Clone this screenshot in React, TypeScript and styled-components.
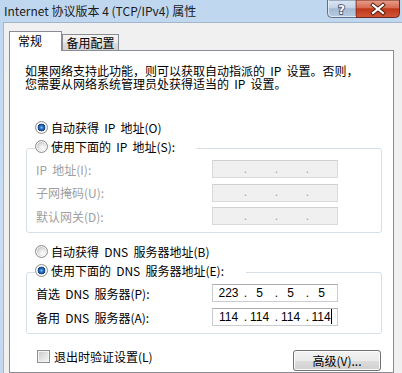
import React from 'react';
import styled, { createGlobalStyle } from 'styled-components';

const GlobalStyle = createGlobalStyle`
  html, body {
    margin: 0;
    padding: 0;
    background: #f0f0f0;
    overflow: hidden;
  }
  body {
    font-family: "Noto Sans CJK SC", "Noto Sans", sans-serif;
    font-size: 12px;
    color: #000;
  }
  * {
    box-sizing: border-box;
  }
`;

const Window = styled.div`
  width: 402px;
  height: 373px;
  overflow: hidden;
  display: flex;
  flex-direction: column;
  background: linear-gradient(to bottom, #bfd6ef 0%, #cadff4 60%, #c3d8ee 100%);
`;

const TitleBar = styled.div`
  height: 22px;
  flex-shrink: 0;
  display: flex;
  justify-content: space-between;
  align-items: flex-start;
`;

const Title = styled.div`
  padding-left: 4px;
  line-height: 21px;
  font-size: 12px;
  color: #1b1b1b;
  white-space: nowrap;
`;

const Controls = styled.div`
  display: flex;
  flex-shrink: 0;
  margin-right: 2px;
`;

const CaptionIcon = styled.svg`
  display: block;
  flex-shrink: 0;
`;

const HelpButton: React.FC = () => (
  <CaptionIcon width="29" height="18" viewBox="0 0 29 18">
    <defs>
      <linearGradient id="helpBg" x1="0" y1="0" x2="0" y2="1">
        <stop offset="0" stopColor="#dde7f3" />
        <stop offset="0.45" stopColor="#c3d3e7" />
        <stop offset="0.5" stopColor="#a5b9d3" />
        <stop offset="1" stopColor="#b8cbe2" />
      </linearGradient>
    </defs>
    <path d="M0.5 0 V13.5 Q0.5 17.5 4.5 17.5 H29 V0 Z" fill="url(#helpBg)" stroke="#5f7189" />
    <path d="M1.5 0 V13 Q1.5 16.5 5 16.5 H29" fill="none" stroke="#eef4fb" strokeOpacity="0.7" />
    <text
      x="14.5"
      y="13.5"
      textAnchor="middle"
      fontFamily="DejaVu Sans, sans-serif"
      fontWeight="bold"
      fontSize="12"
      fill="#fff"
      stroke="#3c4b5e"
      strokeWidth="1.6"
      paintOrder="stroke"
    >
      ?
    </text>
  </CaptionIcon>
);

const CloseButton: React.FC = () => (
  <CaptionIcon width="44" height="18" viewBox="0 0 44 18">
    <defs>
      <linearGradient id="closeBg" x1="0" y1="0" x2="0" y2="1">
        <stop offset="0" stopColor="#e7a08e" />
        <stop offset="0.45" stopColor="#d66b52" />
        <stop offset="0.5" stopColor="#bf3717" />
        <stop offset="1" stopColor="#d0563a" />
      </linearGradient>
    </defs>
    <path d="M0 0 V17.5 H39.5 Q43.5 17.5 43.5 13.5 V0 Z" fill="url(#closeBg)" stroke="#6e2a1c" />
    <path
      d="M17 5 L27 13 M27 5 L17 13"
      stroke="#4a1a10"
      strokeWidth="4"
      strokeLinecap="square"
    />
    <path d="M17 5 L27 13 M27 5 L17 13" stroke="#fff" strokeWidth="2.2" strokeLinecap="square" />
  </CaptionIcon>
);

const Client = styled.div`
  flex: 1;
  min-height: 0;
  margin-left: 3px;
  border-top: 1px solid #a3b5ca;
  border-left: 1px solid #a3b5ca;
  background: #f0f0f0;
  padding: 8px 0 0 5px;
  display: flex;
  flex-direction: column;
`;

const TabStrip = styled.div`
  display: flex;
  align-items: flex-end;
  height: 20px;
  margin-bottom: -1px;
  position: relative;
  z-index: 1;
`;

const Tab = styled.div<{ $active?: boolean }>`
  border: 1px solid #898c95;
  border-bottom: none;
  white-space: nowrap;
  ${({ $active }) =>
    $active
      ? `
    width: 53px;
    height: 20px;
    background: #fff;
    padding-left: 8px;
    line-height: 17px;
  `
      : `
    width: 57px;
    height: 16px;
    margin-bottom: 1px;
    text-align: center;
    line-height: 16px;
    background: linear-gradient(to bottom, #f4f4f4 0%, #e9e9e9 50%, #dcdcdc 51%, #d4d4d4 100%);
  `}
`;

const Panel = styled.div`
  width: 385px;
  flex: 1;
  border: 1px solid #898c95;
  background: #fff;
  padding: 13px 11px 0 15px;
  word-spacing: 2.5px;
`;

const Intro = styled.p`
  margin: 0;
  line-height: 13px;
  white-space: pre;
`;

const RadioRow = styled.div<{ $top: number }>`
  display: flex;
  align-items: center;
  gap: 3px;
  height: 16px;
  margin: ${({ $top }) => $top}px 0 0 10px;
  white-space: pre;
`;

const Radio = styled.span<{ $checked?: boolean }>`
  width: 13px;
  height: 13px;
  flex-shrink: 0;
  border-radius: 50%;
  border: 1px solid #8e8f8f;
  background: ${({ $checked }) =>
    $checked
      ? 'radial-gradient(circle at 50% 50%, #8cc4f5 0, #2f74c4 1.6px, #174d95 3.2px, #10407f 3.6px, #ffffff 4.2px, #f4f4f4 4.8px, #d2d2d2 6px)'
      : 'radial-gradient(circle at 60% 65%, #ffffff 0, #eeeeee 2.5px, #d8d8d8 5px, #c8c8c8 6px)'};
  box-shadow: inset 0 0 0 1px #f7f7f7;
`;

const Group = styled.fieldset<{ $pad: number }>`
  margin: 3px 0 0 1px;
  padding: 2px 0 7px 9px;
  border: 1px solid #d5dfe5;
  border-radius: 3px;
  min-width: 0;
  display: flex;
  flex-direction: column;
  gap: ${({ $pad }) => $pad}px;
`;

const Legend = styled.legend`
  margin-left: -1px;
  padding: 0 22px 4px 0;
  display: flex;
  align-items: center;
  gap: 3px;
  height: 20px;
  white-space: pre;
`;

const FieldRow = styled.div`
  display: flex;
  align-items: center;
  height: 18px;
`;

const FieldLabel = styled.span<{ $disabled?: boolean }>`
  width: 176px;
  color: ${({ $disabled }) => ($disabled ? '#a0a0a0' : '#000')};
  white-space: pre;
`;

const IpField = styled.div<{ $disabled?: boolean }>`
  width: 126px;
  height: 18px;
  border: 1px solid ${({ $disabled }) => ($disabled ? '#d9d9d9' : '#c9cdd2')};
  border-top-color: ${({ $disabled }) => ($disabled ? '#d0d0d0' : '#abadb3')};
  background: ${({ $disabled }) => ($disabled ? '#f0f0f0' : '#fff')};
  padding-left: 3px;
  display: grid;
  grid-template-columns: 25px 6px 25px 6px 25px 6px 25px;
  align-items: center;
  font-family: "Liberation Sans", Arial, sans-serif;
  font-size: 12px;
  line-height: 15px;
  word-spacing: 0;
  color: ${({ $disabled }) => ($disabled ? '#a0a0a0' : '#000')};
`;

const Octet = styled.span`
  text-align: center;
  white-space: nowrap;
`;

const Dot = styled.span`
  text-align: right;
`;

const Caret = styled.span`
  display: inline-block;
  width: 1px;
  height: 15px;
  background: #000;
  vertical-align: -3px;
`;

const Footer = styled.div`
  display: flex;
  justify-content: space-between;
  align-items: flex-start;
  margin-top: 14px;
  padding: 0 1px 0 12px;
`;

const CheckRow = styled.label`
  display: flex;
  align-items: center;
  gap: 4px;
  height: 16px;
`;

const CheckBox = styled.span`
  width: 13px;
  height: 13px;
  border: 1px solid #8e8f8f;
  box-shadow: inset 0 0 0 1px #f4f4f4;
  background: linear-gradient(135deg, #c6c6c6 0%, #e4e4e4 55%, #f7f7f7 100%);
`;

const Button = styled.button`
  margin-top: 2px;
  width: 88px;
  height: 21px;
  padding: 0;
  border: 1px solid #707070;
  border-radius: 3px;
  background: linear-gradient(to bottom, #f2f2f2 0%, #ebebeb 50%, #dddddd 51%, #cfcfcf 100%);
  box-shadow: inset 0 0 0 1px #fcfcfc;
  font-family: inherit;
  font-size: 12px;
  color: #000;
  line-height: 18px;
`;

type IpProps = { values?: string[]; disabled?: boolean; caret?: boolean };

const IpInput: React.FC<IpProps> = ({ values = ['', '', '', ''], disabled, caret }) => (
  <IpField $disabled={disabled}>
    {values.map((v, i) => (
      <React.Fragment key={i}>
        <Octet>
          {v}
          {caret && i === 3 && <Caret />}
        </Octet>
        {i < 3 && <Dot>.</Dot>}
      </React.Fragment>
    ))}
  </IpField>
);

const App: React.FC = () => {
  return (
    <>
      <GlobalStyle />
      <Window>
        <TitleBar>
          <Title>Internet 协议版本 4 (TCP/IPv4) 属性</Title>
          <Controls>
            <HelpButton />
            <CloseButton />
          </Controls>
        </TitleBar>
        <Client>
          <TabStrip>
            <Tab $active>常规</Tab>
            <Tab>备用配置</Tab>
          </TabStrip>
          <Panel>
            <Intro>
              {'如果网络支持此功能，则可以获取自动指派的 IP 设置。否则，\n您需要从网络系统管理员处获得适当的 IP 设置。'}
            </Intro>

            <RadioRow $top={29}>
              <Radio $checked />
              自动获得 IP 地址(O)
            </RadioRow>
            <Group $pad={5.5}>
              <Legend>
                <Radio />
                使用下面的 IP 地址(S):
              </Legend>
              <FieldRow>
                <FieldLabel $disabled>IP 地址(I):</FieldLabel>
                <IpInput disabled />
              </FieldRow>
              <FieldRow>
                <FieldLabel $disabled>子网掩码(U):</FieldLabel>
                <IpInput disabled />
              </FieldRow>
              <FieldRow>
                <FieldLabel $disabled>默认网关(D):</FieldLabel>
                <IpInput disabled />
              </FieldRow>
            </Group>

            <RadioRow $top={10}>
              <Radio />
              自动获得 DNS 服务器地址(B)
            </RadioRow>
            <Group $pad={6}>
              <Legend>
                <Radio $checked />
                使用下面的 DNS 服务器地址(E):
              </Legend>
              <FieldRow>
                <FieldLabel>首选 DNS 服务器(P):</FieldLabel>
                <IpInput values={['223', '5', '5', '5']} />
              </FieldRow>
              <FieldRow>
                <FieldLabel>备用 DNS 服务器(A):</FieldLabel>
                <IpInput values={['114', '114', '114', '114']} caret />
              </FieldRow>
            </Group>

            <Footer>
              <CheckRow>
                <CheckBox />
                退出时验证设置(L)
              </CheckRow>
              <Button>高级(V)...</Button>
            </Footer>
          </Panel>
        </Client>
      </Window>
    </>
  );
};

export default App;
